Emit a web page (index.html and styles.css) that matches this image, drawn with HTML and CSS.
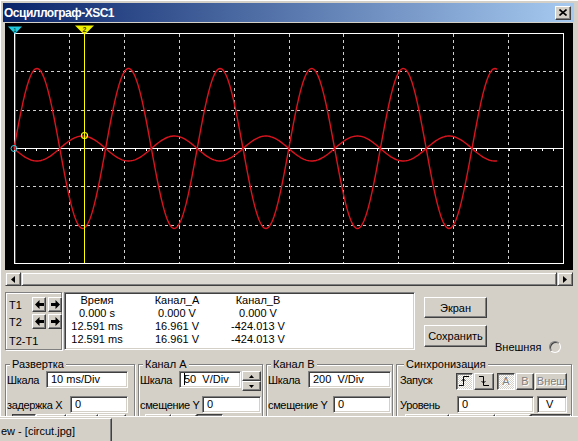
FILE: index.html
```html
<!DOCTYPE html>
<html lang="ru">
<head>
  <meta charset="UTF-8">
  <title>Осциллограф-XSC1</title>
  <link rel="stylesheet" href="styles.css">
</head>
<body>

  <div class="window">
    <div class="titlebar">
      <span class="title">Осциллограф-XSC1</span>
      <div class="close">
        <svg width="8" height="7" viewBox="0 0 8 7"><path d="M0.5 0.5 L7.5 6.5 M7.5 0.5 L0.5 6.5" stroke="#000" stroke-width="1.6"/></svg>
      </div>
    </div>

    <div class="screen">
      <svg width="568" height="247" viewBox="5 23 568 247">
        <g id="grid" stroke="#cfcfcf" stroke-width="1" stroke-dasharray="3 3"></g>
        <rect x="14.5" y="33.5" width="549" height="230" fill="none" stroke="#fff"/>
        <line x1="14" y1="148.5" x2="563" y2="148.5" stroke="#fff"/>
        <path id="ticks" stroke="#fff" stroke-width="1"/>
        <line x1="15.5" y1="34" x2="15.5" y2="263" stroke="#c0182c"/>
        <path id="chA" fill="none" stroke="#d8141e" stroke-width="1.4"/>
        <path id="chB" fill="none" stroke="#d8141e" stroke-width="1.4"/>
        <line x1="84.5" y1="28" x2="84.5" y2="263" stroke="#ffff00"/>
        <polygon points="8,26.5 22,26.5 15,34" fill="#20c8e0"/>
        <text x="15" y="32" font-size="6" text-anchor="middle" fill="#003040" font-family="Liberation Sans">1</text>
        <polygon points="75,25.5 94,25.5 84.5,35" fill="#f0f000"/>
        <text x="84.5" y="32" font-size="7" text-anchor="middle" fill="#404000" font-family="Liberation Sans" font-weight="bold">2</text>
        <circle cx="14" cy="148.5" r="3" fill="none" stroke="#30d0e0" stroke-width="1"/>
        <circle cx="84.5" cy="135.5" r="3" fill="none" stroke="#ffff00" stroke-width="1.2"/>
      </svg>
    </div>

    <div class="hscroll">
      <div class="sb-btn">
        <svg width="4" height="7" viewBox="0 0 4 7"><polygon points="4,0 0,3.5 4,7" fill="#000"/></svg>
      </div>
      <div class="sb-thumb"></div>
      <div class="sb-btn">
        <svg width="4" height="7" viewBox="0 0 4 7"><polygon points="0,0 4,3.5 0,7" fill="#000"/></svg>
      </div>
    </div>

    <div class="readout-row">
      <div class="tbox etched">
        <span class="t-label">T1</span>
        <div class="arrow-btn"><svg width="9" height="9" viewBox="0 0 9 9"><polygon points="0,4.5 4.5,0 4.5,3 9,3 9,6 4.5,6 4.5,9" fill="#000"/></svg></div>
        <div class="arrow-btn"><svg width="9" height="9" viewBox="0 0 9 9"><polygon points="9,4.5 4.5,0 4.5,3 0,3 0,6 4.5,6 4.5,9" fill="#000"/></svg></div>
        <span class="t-label">T2</span>
        <div class="arrow-btn"><svg width="9" height="9" viewBox="0 0 9 9"><polygon points="0,4.5 4.5,0 4.5,3 9,3 9,6 4.5,6 4.5,9" fill="#000"/></svg></div>
        <div class="arrow-btn"><svg width="9" height="9" viewBox="0 0 9 9"><polygon points="9,4.5 4.5,0 4.5,3 0,3 0,6 4.5,6 4.5,9" fill="#000"/></svg></div>
        <span class="t-label t-diff">T2-T1</span>
      </div>

      <div class="readout">
        <span>Время</span><span>Канал_A</span><span>Канал_B</span>
        <span>0.000 s</span><span>0.000 V</span><span>0.000 V</span>
        <span>12.591 ms</span><span>16.961 V</span><span>-424.013 V</span>
        <span>12.591 ms</span><span>16.961 V</span><span>-424.013 V</span>
      </div>

      <div class="actions">
        <div class="btn btn-screen">Экран</div>
        <div class="btn btn-save">Сохранить</div>
      </div>

      <div class="ext">
        <span>Внешняя</span>
        <span class="radio"></span>
      </div>
    </div>

    <div class="groups">
      <div class="group etched g-sweep">
        <span class="g-title">Развертка</span>
        <div class="g-row r1">
          <span>Шкала</span>
          <div class="ctrls"><div class="field" style="width:82px">10 ms/Div</div></div>
        </div>
        <div class="g-row r2">
          <span>задержка X</span>
          <div class="ctrls"><div class="field" style="width:58px">0</div></div>
        </div>
        <div class="g-row r3">
          <div class="btn sm pressed" style="width:24px"></div>
          <div class="btn sm" style="width:30px"></div>
          <div class="btn sm" style="width:32px"></div>
          <div class="btn sm" style="width:28px"></div>
        </div>
      </div>

      <div class="group etched g-cha">
        <span class="g-title">Канал A</span>
        <div class="g-row r1">
          <span>Шкала</span>
          <div class="ctrls">
            <div class="field" style="width:62px"><span class="caret"></span>50&nbsp; V/Div</div>
            <div class="spin">
              <div class="spin-btn"><svg width="5" height="3" viewBox="0 0 5 3"><polygon points="0,3 2.5,0 5,3" fill="#000"/></svg></div>
              <div class="spin-btn"><svg width="5" height="3" viewBox="0 0 5 3"><polygon points="0,0 2.5,3 5,0" fill="#000"/></svg></div>
            </div>
          </div>
        </div>
        <div class="g-row r2">
          <span>смещение Y</span>
          <div class="ctrls"><div class="field" style="width:59px">0</div></div>
        </div>
        <div class="g-row r3">
          <div class="btn sm" style="width:26px"></div>
          <div class="btn sm" style="width:26px"></div>
          <div class="btn sm pressed" style="width:26px"></div>
        </div>
      </div>

      <div class="group etched g-chb">
        <span class="g-title">Канал B</span>
        <div class="g-row r1">
          <span>Шкала</span>
          <div class="ctrls"><div class="field" style="width:83px">200&nbsp; V/Div</div></div>
        </div>
        <div class="g-row r2">
          <span>смещение Y</span>
          <div class="ctrls"><div class="field" style="width:58px">0</div></div>
        </div>
      </div>

      <div class="group etched g-sync">
        <span class="g-title">Синхронизация</span>
        <div class="g-row r1">
          <span>Запуск</span>
          <div class="ctrls">
            <div class="btn edge pressed">
              <svg width="11" height="10" viewBox="0 0 11 10"><path d="M0 9.5 H4.5 V0.5 H10 M2.5 5 L4.5 3 L6.5 5" fill="none" stroke="#000" stroke-width="1"/></svg>
            </div>
            <div class="btn edge fall">
              <svg width="11" height="10" viewBox="0 0 11 10"><path d="M0 0.5 H4.5 V9.5 H10 M2.5 5 L4.5 7 L6.5 5" fill="none" stroke="#000" stroke-width="1"/></svg>
            </div>
            <div class="btn src pressed dis">A</div>
            <div class="btn src dis">B</div>
            <div class="btn src ext-src dis">Внеш</div>
          </div>
        </div>
        <div class="g-row r2">
          <span>Уровень</span>
          <div class="ctrls">
            <div class="field" style="width:77px">0</div>
            <div class="field unit" style="width:30px">V</div>
          </div>
        </div>
        <div class="g-row r3">
          <div class="btn sm" style="width:44px"></div>
          <div class="btn sm" style="width:46px"></div>
          <div class="btn sm" style="width:36px"></div>
          <div class="btn sm pressed" style="width:40px"></div>
        </div>
      </div>
    </div>
  </div>

  <div class="taskbar">
    <div class="task">ew - [circut.jpg]</div>
  </div>

  <script>
    const grid = document.getElementById('grid');
    const ns = 'http://www.w3.org/2000/svg';

    function addLine(x1, y1, x2, y2) {
      const l = document.createElementNS(ns, 'line');
      l.setAttribute('x1', x1);
      l.setAttribute('y1', y1);
      l.setAttribute('x2', x2);
      l.setAttribute('y2', y2);
      grid.appendChild(l);
    }

    // 10 x 6 divisions
    for (let i = 1; i < 10; i++) {
      const x = Math.round(14 + 54.9 * i) + 0.5;
      addLine(x, 34, x, 263);
    }
    for (let j = 1; j < 6; j++) {
      if (j === 3) continue;
      const y = Math.round(33 + 38.33 * j) + 0.5;
      addLine(15, y, 563, y);
    }

    let t = '';
    for (let x = 14; x <= 563; x += 11) {
      t += 'M' + (x + 0.5) + ' 149 V151 ';
    }
    document.getElementById('ticks').setAttribute('d', t);

    const period = 91.6;
    function wave(amp) {
      let d = '';
      for (let x = 14; x <= 497; x++) {
        const y = 148.5 - amp * Math.sin(2 * Math.PI * (x - 14) / period);
        d += (x === 14 ? 'M' : 'L') + x + ' ' + y.toFixed(1) + ' ';
      }
      return d;
    }
    document.getElementById('chA').setAttribute('d', wave(80));
    document.getElementById('chB').setAttribute('d', wave(-12.5));
  </script>
</body>
</html>
```

FILE: styles.css
```css
:root {
  --face: #d4d0c8;
  --light: #fff;
  --shadow: #808080;
  --dark: #404040;
}

* {
  box-sizing: border-box;
}

body {
  margin: 0;
  width: 578px;
  height: 441px;
  overflow: hidden;
  background: var(--face);
  font-family: 'Liberation Sans', Arial, sans-serif;
  font-size: 11px;
  color: #000;
}

.window {
  height: 416px;
  overflow: hidden;
  padding-top: 3px;
  box-shadow: inset 1px 1px 0 var(--light);
}

/* Title bar */
.titlebar {
  display: flex;
  align-items: center;
  height: 19px;
  margin: 0 4px 0 3px;
  padding-left: 1px;
  background: linear-gradient(to right, #0a246a, #a6caf0);
}

.title {
  color: #fff;
  font-weight: bold;
  font-size: 12px;
  letter-spacing: -0.5px;
}

.close {
  display: flex;
  align-items: center;
  justify-content: center;
  width: 16px;
  height: 14px;
  margin-left: auto;
  margin-right: 3px;
  background: var(--face);
  border: 1px solid;
  border-color: var(--light) var(--dark) var(--dark) var(--light);
  box-shadow: inset -1px -1px 0 var(--shadow);
}

/* Scope screen */
.screen {
  height: 247px;
  margin: 1px 5px 0;
  background: #000;
}

.screen svg {
  display: block;
}

.hscroll {
  display: flex;
  height: 14px;
  margin: 2px 5px 0;
}

.sb-btn,
.sb-thumb {
  border: 1px solid;
  border-color: var(--face) var(--dark) var(--dark) var(--face);
  box-shadow: inset 1px 1px 0 var(--light), inset -1px -1px 0 var(--shadow);
  background: var(--face);
}

.sb-btn {
  display: flex;
  align-items: center;
  justify-content: center;
  width: 16px;
}

.sb-thumb {
  flex: 1;
  background: #dcd9d2;
}

/* Readout row */
.readout-row {
  display: flex;
  height: 58px;
  margin-top: 6px;
}

.etched {
  border: 1px solid var(--shadow);
  box-shadow: inset 1px 1px 0 var(--light), 1px 1px 0 var(--light);
}

.tbox {
  display: grid;
  grid-template-columns: 21px 14px 14px;
  grid-template-rows: 15px 15px 16px;
  column-gap: 2px;
  row-gap: 2px;
  width: 57px;
  margin-left: 5px;
  padding: 4px 0 0 3px;
}

.t-label {
  line-height: 16px;
}

.t-diff {
  grid-column: 1 / 4;
  padding-top: 2px;
}

.arrow-btn {
  display: flex;
  align-items: center;
  justify-content: center;
  border: 1px solid;
  border-color: var(--light) var(--dark) var(--dark) var(--light);
  box-shadow: inset -1px -1px 0 var(--shadow);
}

.readout {
  display: grid;
  grid-template-columns: 64px 96px 66px;
  grid-auto-rows: 13px;
  align-content: start;
  width: 351px;
  margin-left: 2px;
  padding-top: 1px;
  background: #fff;
  border: 1px solid;
  border-color: var(--shadow) var(--light) var(--light) var(--shadow);
  box-shadow: inset 1px 1px 0 var(--dark), inset -1px -1px 0 var(--face);
  line-height: 13px;
  text-align: center;
  white-space: nowrap;
}

.actions {
  width: 63px;
  margin-left: 9px;
}

.btn {
  display: flex;
  align-items: center;
  justify-content: center;
  background: var(--face);
  border: 1px solid;
  border-color: var(--light) var(--dark) var(--dark) var(--light);
  box-shadow: inset -1px -1px 0 var(--shadow);
  white-space: nowrap;
}

.btn-screen {
  height: 21px;
  margin-top: 5px;
}

.btn-save {
  height: 22px;
  margin-top: 7px;
}

.ext {
  display: flex;
  align-items: center;
  height: 13px;
  margin: 48px 0 0 8px;
}

.radio {
  width: 12px;
  height: 12px;
  margin-left: 8px;
  border-radius: 50%;
  border: 1px solid;
  border-color: var(--shadow) var(--light) var(--light) var(--shadow);
  box-shadow: inset 1px 1px 0 var(--dark);
  background: var(--face);
}

/* Control groups */
.groups {
  display: flex;
  gap: 3px;
  margin: 14px 0 0 5px;
}

.group {
  height: 80px;
}

.g-sweep { width: 130px; }
.g-cha { width: 125px; }
.g-chb { width: 127px; }
.g-sync { width: 176px; padding-left: 2px; }

.g-title {
  display: block;
  width: max-content;
  margin: -7px 0 0 4px;
  padding: 0 2px;
  line-height: 13px;
  background: var(--face);
}

.g-sync .g-title {
  margin-left: 5px;
}

.g-row {
  display: flex;
  align-items: center;
  padding-left: 1px;
  white-space: nowrap;
}

.g-row > span {
  letter-spacing: -0.35px;
}

.r1 {
  height: 19px;
  margin-top: -1px;
}

.r2 {
  height: 17px;
  margin-top: 7px;
}

.r3 {
  height: 20px;
  margin-top: 1px;
  padding-left: 6px;
}

.r3 .btn {
  height: 20px;
}

.btn.pressed {
  border-color: var(--dark) var(--light) var(--light) var(--dark);
  box-shadow: inset 1px 1px 0 var(--shadow);
  background: repeating-conic-gradient(#fff 0 25%, var(--face) 0 50%) 0 0 / 2px 2px;
}

.ctrls {
  display: flex;
  align-items: center;
  margin-left: auto;
  margin-right: 1px;
}

.g-sweep .ctrls {
  margin-right: 6px;
}

.g-sync .ctrls {
  margin-right: 4px;
}

.field {
  height: 17px;
  padding-left: 4px;
  line-height: 15px;
  background: #fff;
  border: 1px solid;
  border-color: var(--shadow) var(--light) var(--light) var(--shadow);
  box-shadow: inset 1px 1px 0 var(--dark), inset -1px -1px 0 var(--face);
  overflow: hidden;
  white-space: nowrap;
}

.field.unit {
  margin-left: 3px;
  padding-left: 8px;
}

.caret {
  display: inline-block;
  width: 1px;
  height: 12px;
  margin-right: -1px;
  background: #000;
  vertical-align: -2px;
}

.spin {
  display: flex;
  flex-direction: column;
  width: 19px;
  height: 20px;
  margin-left: 1px;
  margin-top: 3px;
}

.spin-btn {
  display: flex;
  align-items: center;
  justify-content: center;
  flex: 1;
  border: 1px solid;
  border-color: var(--light) var(--dark) var(--dark) var(--light);
  box-shadow: inset -1px -1px 0 var(--shadow);
}

.edge {
  width: 17px;
  height: 17px;
  margin-top: 3px;
}

.fall {
  width: 20px;
  margin-left: 1px;
}

.src {
  width: 18px;
  height: 17px;
  margin-top: 3px;
  margin-left: 1px;
}

.src.pressed {
  margin-left: 3px;
}

.ext-src {
  width: 32px;
}

.dis {
  color: var(--shadow);
  text-shadow: 1px 1px 0 var(--light);
}

/* Taskbar */
.taskbar {
  height: 25px;
  border-top: 1px solid var(--light);
  background: var(--face);
  padding-top: 1px;
}

.task {
  width: 112px;
  height: 24px;
  padding-left: 1px;
  line-height: 25px;
  border-top: 1px solid var(--light);
  border-right: 1px solid var(--dark);
  box-shadow: inset -1px 0 0 var(--shadow);
  white-space: nowrap;
  overflow: hidden;
}
```
